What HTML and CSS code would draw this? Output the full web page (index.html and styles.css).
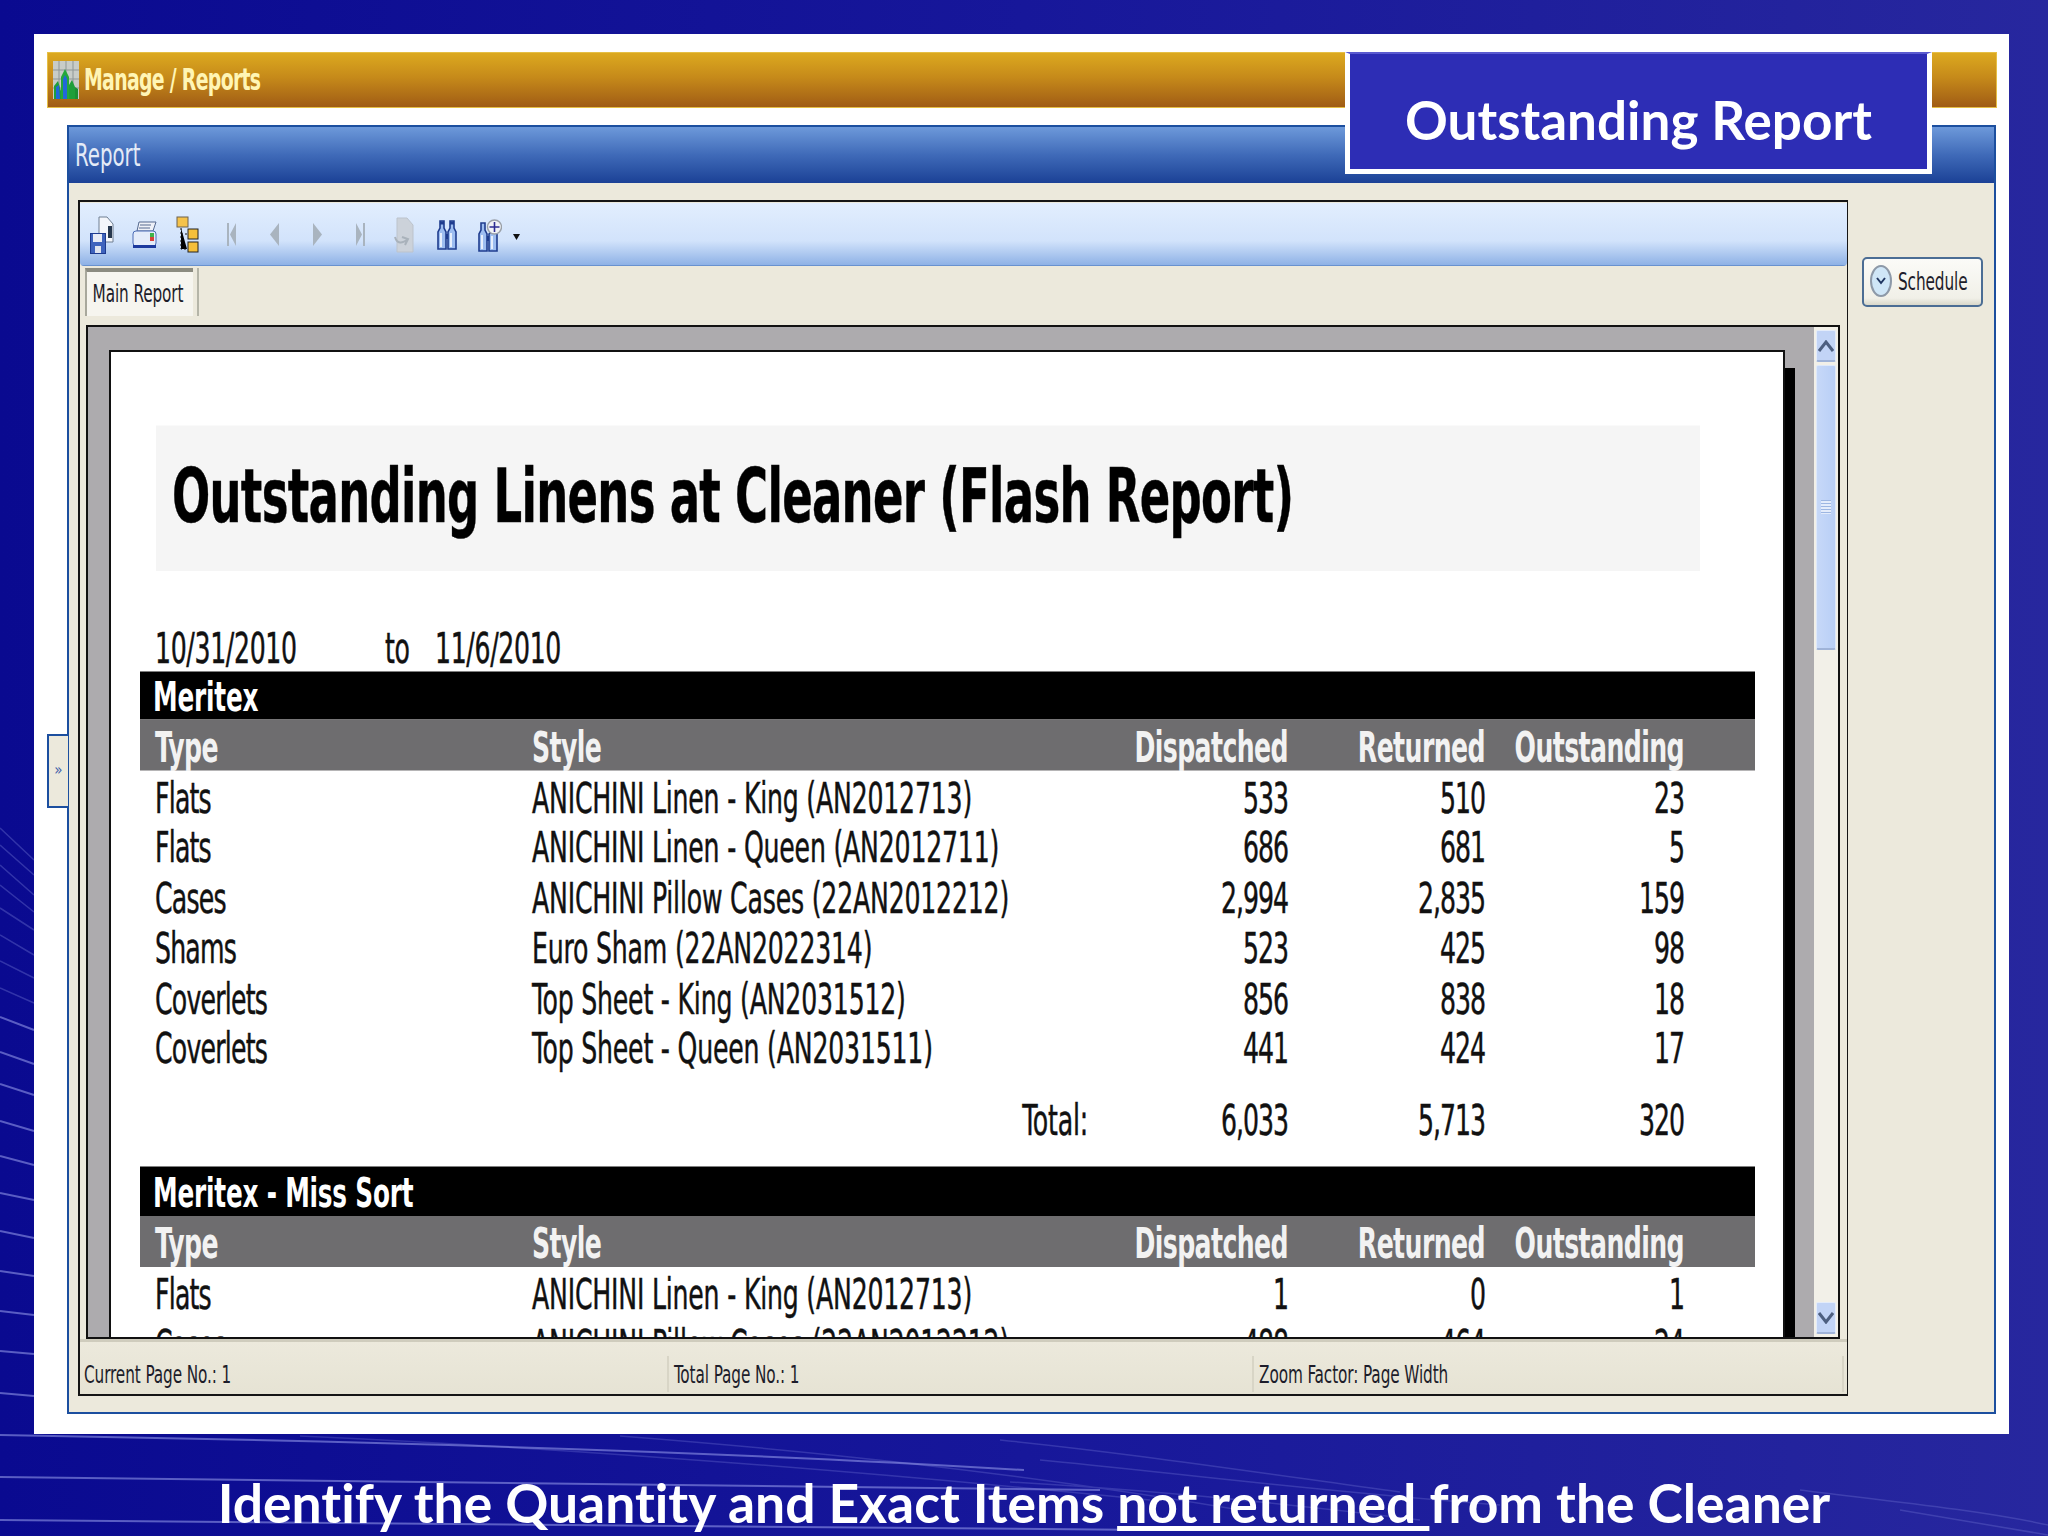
FILE: index.html
```html
<!DOCTYPE html>
<html lang="en">
<head>
  <meta charset="UTF-8">
  <title>Outstanding Report</title>
  <link rel="stylesheet" href="styles.css">
</head>
<body>
  <!-- Slide background lines -->
  <svg class="bg-lines" width="2048" height="1536" viewBox="0 0 2048 1536" fill="none" stroke="#8f95e6">
    <g stroke-width="1.5" opacity="0.3">
      <path d="M0 828L34 860M0 845L34 875M0 865L34 895M0 885L34 912M0 908L34 930M0 935L34 955M0 961L34 978M0 988L34 1003"/>
    </g>
    <g stroke-width="2" opacity="0.6">
      <path d="M0 1017L34 1030M0 1052L34 1064M0 1084L34 1095M0 1121L34 1131M0 1156L34 1165M0 1193L34 1200M0 1231L34 1238M0 1271L34 1276M0 1311L34 1315M0 1351L34 1354M0 1393L34 1396"/>
      <path d="M0 1435C300 1440 700 1450 1024 1470M0 1477C300 1482 700 1482 1100 1490M0 1520C300 1522 700 1524 1150 1530"/>
    </g>
    <g stroke-width="1.5" opacity="0.25">
      <path d="M300 1436C500 1445 800 1465 1150 1500M620 1436C800 1450 1000 1470 1240 1510M1000 1440C1120 1452 1240 1470 1400 1492M1040 1460C1150 1470 1300 1490 1500 1505M1010 1482C1150 1490 1300 1505 1420 1520M1800 1490C1880 1500 1980 1510 2048 1525M1900 1510L2048 1535"/>
    </g>
  </svg>

  <div class="sheet-white">
    <div class="gold-bar">
      <svg class="gold-icon" width="26" height="38" viewBox="0 0 26 38">
        <rect width="26" height="38" fill="#c8ccc8"/>
        <path d="M0 9H26M0 18H26M0 27H26M6 0V38M13 0V38M20 0V38" stroke="#8f9696" stroke-width="1"/>
        <path d="M1 38V25L5 20L8 30V38Z" fill="#1f9f3a"/>
        <path d="M8 38V16L12 8L16 16V38Z" fill="#25a83a"/>
        <path d="M10 38V18L12 14L14 18V38Z" fill="#2268d8"/>
        <path d="M16 38V24L19 19L22 26V38Z" fill="#1f9f3a"/>
        <path d="M3 38V26L6 24L7 38Z" fill="#2268d8"/>
        <path d="M22 38V26L25 28V38Z" fill="#1c8f34"/>
      </svg>
      <span class="tall gold-text">Manage / Reports</span>
    </div>

    <div class="report-panel">
      <div class="report-head"><span class="tall report-title">Report</span></div>
      <div class="report-body">
        <div class="viewer">
          <!-- Toolbar -->
          <div class="toolbar">
            <div class="tool">
              <svg width="24" height="38" viewBox="0 0 24 38">
                <path d="M9 1H17L23 8V26H9Z" fill="#f4f6fb" stroke="#6f7f92"/>
                <path d="M18 10H22V22H18Z" fill="#27384f"/>
                <rect x="0.5" y="17.5" width="15" height="20" fill="#3f63bd" stroke="#1d3a8e"/>
                <rect x="3" y="18" width="9" height="8" fill="#e7ebf5"/>
                <rect x="5" y="30" width="6" height="7" fill="#dfe4ef"/>
              </svg>
            </div>
            <div class="tool">
              <svg width="25" height="28" viewBox="0 0 25 28">
                <path d="M7 1H24L21 10H5Z" fill="#eef1f8" stroke="#55698f"/>
                <path d="M8 4H19M7 7H18" stroke="#55698f"/>
                <rect x="1" y="10" width="23" height="15" rx="3" fill="#e4ecfa" stroke="#4a6bb5"/>
                <rect x="1" y="24" width="23" height="3" fill="#1d3a9e"/>
                <rect x="18" y="12" width="4" height="4" fill="#3fb24a"/>
                <rect x="18" y="16" width="4" height="4" fill="#d8403a"/>
              </svg>
            </div>
            <div class="tool">
              <svg width="23" height="37" viewBox="0 0 23 37">
                <rect x="1" y="1" width="11" height="10" fill="#f5c24a" stroke="#6b6050"/>
                <rect x="12" y="13" width="10" height="10" fill="#f5bf3a" stroke="#222"/>
                <rect x="12" y="26" width="10" height="10" fill="#f5bf3a" stroke="#222"/>
                <path d="M5 12V33H11M5 18H11" stroke="#111" stroke-dasharray="2 2"/>
              </svg>
            </div>
            <div class="tool">
              <svg width="9" height="23" viewBox="0 0 9 23"><path d="M0 0H2V23H0ZM9 0V23L3 11.5Z" fill="#a9b4bf"/></svg>
            </div>
            <div class="tool">
              <svg width="9" height="23" viewBox="0 0 9 23"><path d="M9 0V23L0 11.5Z" fill="#a9b4bf"/></svg>
            </div>
            <div class="tool">
              <svg width="9" height="23" viewBox="0 0 9 23"><path d="M0 0V23L9 11.5Z" fill="#a9b4bf"/></svg>
            </div>
            <div class="tool">
              <svg width="9" height="23" viewBox="0 0 9 23"><path d="M0 0V23L6 11.5ZM7 0H9V23H7Z" fill="#a9b4bf"/></svg>
            </div>
            <div class="tool">
              <svg width="20" height="36" viewBox="0 0 20 36">
                <path d="M3 1H13L19 8V35H3Z" fill="#ccd2da" stroke="#bcc3cc"/>
                <path d="M1 20C3 27 8 27 14 22M8 20L14 22L11 28" fill="none" stroke="#a9b2bb" stroke-width="2"/>
              </svg>
            </div>
            <div class="tool">
              <svg width="20" height="30" viewBox="0 0 20 30">
                <path d="M1 29V12L3 8V1H7V8L9 12V29Z" fill="#9dbdf0" stroke="#1f3c8e" stroke-width="1.6"/>
                <path d="M11 29V12L13 8V1H17V8L19 12V29Z" fill="#9dbdf0" stroke="#1f3c8e" stroke-width="1.6"/>
                <path d="M9 14H11V19H9Z" fill="#1f3c8e"/>
                <path d="M4 13V27M14 13V27" stroke="#e6eefc" stroke-width="2"/>
                <path d="M3 3H7M13 3H17" stroke="#1f3c8e" stroke-width="3"/>
              </svg>
            </div>
            <div class="tool tool-zoom">
              <svg width="24" height="34" viewBox="0 0 24 34">
                <path d="M1 33V16L3 12V5H7V12L9 16V33Z" fill="#9dbdf0" stroke="#1f3c8e" stroke-width="1.6"/>
                <path d="M11 33V16L13 14H17L19 16V33Z" fill="#9dbdf0" stroke="#1f3c8e" stroke-width="1.6"/>
                <path d="M9 18H11V23H9Z" fill="#1f3c8e"/>
                <path d="M4 17V31M14 18V31" stroke="#e6eefc" stroke-width="2"/>
                <circle cx="16.5" cy="9" r="7" fill="#f0f2f6" stroke="#9aa0a8" stroke-width="1.4"/>
                <path d="M16.5 4V14M11.5 9H21.5" stroke="#2c2c92" stroke-width="1.6"/>
              </svg>
              <svg class="caret" width="7" height="6" viewBox="0 0 7 6"><path d="M0 0H7L3.5 6Z" fill="#111"/></svg>
            </div>
          </div>

          <div class="tabs">
            <div class="tab"><span class="tall small-text">Main Report</span></div>
          </div>

          <!-- Report view -->
          <div class="report-view">
            <div class="paper">
              <div class="sheet">
                <div class="title-band"><h1 class="title">Outstanding Linens at Cleaner (Flash Report)</h1></div>
                <div class="dates"><span class="date-from">10/31/2010</span><span class="date-to">to</span><span>11/6/2010</span></div>

                <div class="band-black">Meritex</div>
                <div class="row row-head"><span>Type</span><span>Style</span><span class="num">Dispatched</span><span class="num">Returned</span><span class="num">Outstanding</span></div>
                <div class="row"><span class="type">Flats</span><span>ANICHINI Linen - King (AN2012713)</span><span class="num">533</span><span class="num">510</span><span class="num">23</span></div>
                <div class="row"><span class="type">Flats</span><span>ANICHINI Linen - Queen (AN2012711)</span><span class="num">686</span><span class="num">681</span><span class="num">5</span></div>
                <div class="row"><span class="type">Cases</span><span>ANICHINI Pillow Cases (22AN2012212)</span><span class="num">2,994</span><span class="num">2,835</span><span class="num">159</span></div>
                <div class="row"><span class="type">Shams</span><span>Euro Sham (22AN2022314)</span><span class="num">523</span><span class="num">425</span><span class="num">98</span></div>
                <div class="row"><span class="type">Coverlets</span><span>Top Sheet - King (AN2031512)</span><span class="num">856</span><span class="num">838</span><span class="num">18</span></div>
                <div class="row"><span class="type">Coverlets</span><span>Top Sheet - Queen (AN2031511)</span><span class="num">441</span><span class="num">424</span><span class="num">17</span></div>
                <div class="row row-total"><span></span><span class="total-label">Total:</span><span class="num">6,033</span><span class="num">5,713</span><span class="num">320</span></div>

                <div class="band-black band-second">Meritex - Miss Sort</div>
                <div class="row row-head"><span>Type</span><span>Style</span><span class="num">Dispatched</span><span class="num">Returned</span><span class="num">Outstanding</span></div>
                <div class="row"><span class="type">Flats</span><span>ANICHINI Linen - King (AN2012713)</span><span class="num">1</span><span class="num">0</span><span class="num">1</span></div>
                <div class="row"><span class="type">Cases</span><span>ANICHINI Pillow Cases (22AN2012212)</span><span class="num">488</span><span class="num">464</span><span class="num">24</span></div>
              </div>
            </div>
            <div class="scrollbar">
              <div class="scroll-btn"><svg width="16" height="12" viewBox="0 0 16 12"><path d="M1 11L8 2L15 11" fill="none" stroke="#4d5f80" stroke-width="3"/></svg></div>
              <div class="scroll-thumb"><span class="grip"></span></div>
              <div class="scroll-fill"></div>
              <div class="scroll-btn"><svg width="16" height="12" viewBox="0 0 16 12"><path d="M1 1L8 10L15 1" fill="none" stroke="#4d5f80" stroke-width="3"/></svg></div>
            </div>
          </div>

          <div class="statusbar">
            <div class="status-cell"><span class="tall small-text">Current Page No.: 1</span></div>
            <div class="status-cell"><span class="tall small-text">Total Page No.: 1</span></div>
            <div class="status-cell"><span class="tall small-text">Zoom Factor: Page Width</span></div>
          </div>
        </div>

        <div class="side">
          <div class="schedule-btn">
            <svg width="22" height="32" viewBox="0 0 22 32">
              <ellipse cx="11" cy="16" rx="10" ry="15" fill="#cfe6f7" stroke="#8d99a8" stroke-width="2"/>
              <path d="M7 13L11 18L15 13" fill="none" stroke="#1f3560" stroke-width="2"/>
            </svg>
            <span class="tall small-text">Schedule</span>
          </div>
        </div>
      </div>
    </div>

    <div class="side-handle">&raquo;</div>
  </div>

  <!-- Slide callout and caption -->
  <div class="callout">Outstanding Report</div>
  <p class="caption">Identify the Quantity and Exact Items <u>not returned </u>from the Cleaner</p>
</body>
</html>
```

FILE: styles.css
```css
* {
  margin: 0;
  padding: 0;
  box-sizing: border-box;
}

body {
  position: relative;
  width: 2048px;
  height: 1536px;
  overflow: hidden;
  padding: 34px 0 0 34px;
  background: linear-gradient(90deg, #0a0a90 0%, #17179a 50%, #27279e 100%);
  font-family: "DejaVu Sans Condensed", "DejaVu Sans", sans-serif;
}

.bg-lines {
  position: absolute;
  top: 0;
  left: 0;
}

/* Stretched screen text */
.tall {
  display: inline-block;
  transform: scaleY(1.45);
}

.small-text {
  font-size: 17px;
  letter-spacing: -0.1px;
  color: #1d1d2a;
}

.sheet-white {
  position: relative;
  width: 1975px;
  height: 1400px;
  padding: 18px 0 0 13px;
  background: #fff;
}

/* Gold title bar */
.gold-bar {
  display: flex;
  align-items: center;
  width: 1950px;
  height: 56px;
  padding-left: 5px;
  background: linear-gradient(180deg, #dca91f 0%, #c68a1a 45%, #a05c15 100%);
  border: 1px solid #e6bf45;
}

.gold-icon {
  margin-right: 5px;
}

.gold-text {
  font-size: 21px;
  font-weight: 700;
  color: #fff5b5;
  letter-spacing: -0.7px;
}

/* Report panel */
.report-panel {
  width: 1929px;
  height: 1289px;
  margin: 17px 0 0 20px;
  background: #ece9dc;
  border: 2px solid #1c4f9f;
}

.report-head {
  display: flex;
  align-items: center;
  height: 56px;
  padding-left: 6px;
  background: linear-gradient(180deg, #6d99da 0%, #3f6ab8 50%, #1b4196 100%);
}

.report-title {
  font-size: 22px;
  color: #e4ebf7;
}

.report-body {
  display: flex;
  padding: 17px 0 0 9px;
}

.viewer {
  display: flex;
  flex-direction: column;
  width: 1770px;
  height: 1196px;
  padding-top: 1px;
  border: 2px solid #151515;
  border-right-width: 1px;
}

.toolbar {
  display: flex;
  align-items: center;
  height: 63px;
  background: linear-gradient(180deg, #e2eefe 0%, #d2e3fb 60%, #8fb2e6 98%, #4f7cc0 100%);
  border-radius: 0 0 4px 4px;
}

.tool {
  display: flex;
  justify-content: center;
  align-items: center;
  flex: none;
  width: 43.2px;
}

.tool-zoom {
  position: relative;
}

.caret {
  position: absolute;
  left: 44px;
  top: 16px;
}

.tabs {
  height: 59px;
  padding: 2px 0 0 5px;
}

.tab {
  display: flex;
  justify-content: center;
  align-items: center;
  width: 108px;
  height: 48px;
  padding: 0 4px 3px 0;
  background: #f6f5ef;
  border-top: 4px solid #8b8b80;
  border-left: 2px solid #a8a89c;
  box-shadow: 4px 0 0 #ece9dc, 6px 0 0 #b5b5a8;
}

/* Grey area behind the paper */
.report-view {
  display: flex;
  flex: none;
  width: 1754px;
  height: 1014px;
  margin-left: 6px;
  overflow: hidden;
  background: #adabae;
  border: 2px solid #111;
}

.paper {
  flex: none;
  width: 1676px;
  height: 1200px;
  margin: 23px 0 0 21px;
  background: #fff;
  border: 2px solid #111;
  box-shadow: 10px 18px 0 #000;
}

.sheet {
  width: 1672px;
  padding: 49px 0 0 29px;
  transform: scaleY(1.5);
  transform-origin: 0 0;
  color: #111;
  font-size: 28px;
  letter-spacing: -0.2px;
  -webkit-text-stroke: 0.3px #111;
}

.title-band {
  display: flex;
  align-items: center;
  width: 1544px;
  height: 97px;
  margin-left: 16px;
  padding: 0 0 3px 16px;
  background: #f5f5f5;
}

.title {
  font-size: 50px;
  font-weight: 700;
  letter-spacing: -0.7px;
  color: #000;
}

.dates {
  display: flex;
  height: 33px;
  margin: 35px 0 -1px 15px;
  line-height: 33px;
  letter-spacing: -0.35px;
}

.date-from {
  width: 230px;
}

.date-to {
  width: 50px;
}

.band-black {
  width: 1615px;
  height: 32px;
  padding-left: 13px;
  background: #000;
  color: #fff;
  font-size: 27.5px;
  font-weight: 700;
  line-height: 32px;
  -webkit-text-stroke: 0;
}

.band-second {
  height: 33.4px;
  margin-top: 15px;
  line-height: 34px;
}

.row {
  display: grid;
  grid-template-columns: 377px 568px 188px 197px 199px;
  align-items: center;
  width: 1615px;
  height: 33.4px;
  padding: 2px 0 0 15px;
  white-space: nowrap;
}

.row-head {
  height: 34px;
  background: #6e6d6f;
  color: #f2f2f2;
  font-weight: 700;
  letter-spacing: -0.6px;
  -webkit-text-stroke: 0;
}

.row-total {
  margin-top: 15px;
}

.type {
  letter-spacing: -0.8px;
}

.num {
  text-align: right;
  letter-spacing: -1px;
}

.row-head .num {
  letter-spacing: -0.6px;
}

.total-label {
  padding-right: 12px;
  text-align: right;
}

/* Scrollbar */
.scrollbar {
  display: flex;
  flex-direction: column;
  flex: none;
  width: 24px;
  margin-left: 29px;
  padding: 3px 2px;
  background: #f2f0e8;
}

.scroll-btn {
  display: flex;
  justify-content: center;
  align-items: center;
  flex: none;
  height: 32px;
  background: #c2d4f6;
  border: 1px solid #e4ecfa;
  border-bottom: 2px solid #9fb3d8;
  border-radius: 2px;
}

.scroll-thumb {
  display: flex;
  justify-content: center;
  align-items: center;
  flex: none;
  height: 285px;
  margin-top: 3px;
  background: linear-gradient(90deg, #c6d8f8, #b9cff6);
  border: 1px solid #dfe9fa;
  border-bottom: 2px solid #9fb3d8;
  border-radius: 2px;
}

.grip {
  width: 10px;
  height: 14px;
  background: repeating-linear-gradient(180deg, #9db6e2 0, #9db6e2 1px, #e4ecfb 1px, #e4ecfb 3px);
}

.scroll-fill {
  flex: 1;
}

/* Status bar */
.statusbar {
  display: grid;
  grid-template-columns: 587px 585px 590px;
  flex: 1;
  padding: 14px 2px 2px;
  border-top: 3px solid #cfccbd;
  background: linear-gradient(180deg, #ece9dc 0%, #e6e3d4 100%);
}

.status-cell {
  display: flex;
  align-items: center;
  padding-left: 2px;
  border-right: 2px solid #d8d5c6;
}

.status-cell + .status-cell {
  padding-left: 5px;
}

/* Right hand button */
.side {
  padding: 57px 0 0 14px;
}

.schedule-btn {
  display: flex;
  align-items: center;
  gap: 6px;
  width: 121px;
  height: 50px;
  padding: 0 0 3px 6px;
  background: linear-gradient(180deg, #fbfbf8 0%, #f1f0e8 85%, #d9d8ca 100%);
  border: 2px solid #4b6d94;
  border-radius: 5px;
}

.side-handle {
  position: absolute;
  top: 700px;
  left: 13px;
  width: 21px;
  height: 74px;
  background: #ece9dc;
  border: 2px solid #1c4f9f;
  border-right: 0;
  color: #3c5ca8;
  font-size: 15px;
  line-height: 68px;
  text-align: center;
}

/* Slide callout over the window */
.callout {
  position: absolute;
  top: 52px;
  left: 1345px;
  width: 587px;
  height: 122px;
  padding-top: 34px;
  background: #2d2db5;
  border: 5px solid #fff;
  border-top: 2px solid #5a5ad0;
  color: #fff;
  font-family: Lato, "Open Sans", sans-serif;
  font-size: 53px;
  font-weight: 700;
  line-height: 64px;
  text-align: center;
}

.caption {
  position: absolute;
  top: 1469px;
  left: 0;
  width: 2048px;
  color: #fff;
  font-family: Lato, "Open Sans", sans-serif;
  font-size: 53.4px;
  font-weight: 700;
  font-variant-ligatures: none;
  line-height: 66px;
  text-align: center;
}
```
